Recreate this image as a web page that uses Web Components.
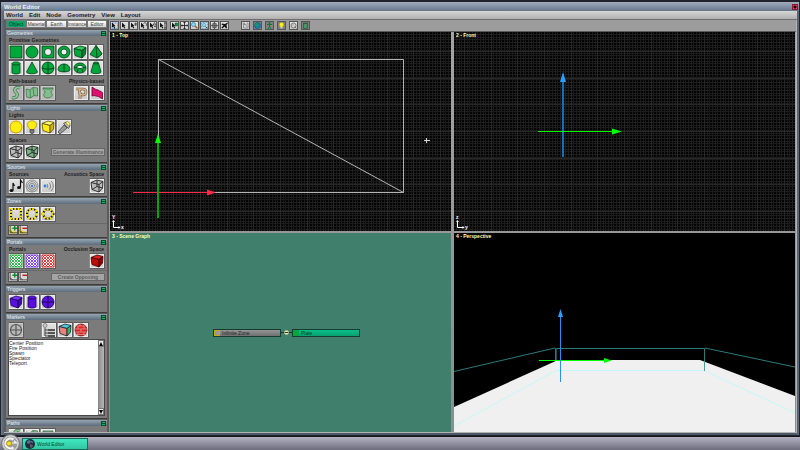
<!DOCTYPE html>
<html lang="en">
<head>
<meta charset="utf-8">
<title>World Editor</title>
<style>
  html, body {
    margin: 0;
    height: 100%;
    overflow: hidden;
    background: #2b3038;
    font-family: "Liberation Sans", Arial, sans-serif;
    font-size: 5px;
    line-height: 6px;
  }
  body {
    display: flex;
    flex-direction: column;
  }
</style>
</head>
<body>
<editor-window heading="World Editor">
  <menu-bar slot="menu" items="World,Edit,Node,Geometry,View,Layout"></menu-bar>
  <tool-sidebar slot="sidebar"></tool-sidebar>
  <tool-bar slot="toolbar"></tool-bar>
  <view-port heading="1 - Top" kind="top"></view-port>
  <view-port heading="2 - Front" kind="front"></view-port>
  <view-port heading="3 - Scene Graph" kind="graph">
    <scene-graph></scene-graph>
  </view-port>
  <view-port heading="4 - Perspective" kind="perspective"></view-port>
</editor-window>
<task-bar></task-bar>

<script>
const GREEN = 'fill="#00a83c" stroke="#053c18" stroke-width=".8"';
const PALE = 'fill="#7fc08c" stroke="#46734e" stroke-width=".8"';
const VIOLET = 'fill="#5a0ee0" stroke="#1c0458" stroke-width=".8"';
const LINE = 'fill="none" stroke="#222" stroke-width=".9"';

const box = (top, left, right, line) => `
  <g stroke="${line}" stroke-width=".8" stroke-linejoin="round">
    <path fill="${top}" d="M2 4.500 8 2l6 1.500-4 3z"/>
    <path fill="${left}" d="M2 4.500l8 2V14l-7-2.500z"/>
    <path fill="${right}" d="M10 6.500l4-3L13.500 10 10 14z"/>
  </g>`;
const wireBox = (fill) => `
  <path fill="${fill}" d="M2 4.500 8 2l6 1.500L13.500 10 10 14l-7-2.500z"/>
  <path ${LINE} d="M2 4.500 8 2l6 1.500-4 3zM2 4.500l1 7 7 2.500V6.500M14 3.500 13.500 10 10 14M8 2v6.500l5.500 1.500M8 8.500l-5 3"/>`;
const mesh = (color) => `
  <path fill="#fff" d="M2 2h12v12H2z"/>
  <path fill="none" stroke="${color}" stroke-width=".9" d="M2 2h12v12H2zM2 5l3-3M2 8l6-6M2 11l9-9M2 14 14 2M5 14l9-9M8 14l6-6M11 14l3-3M11 2l3 3M8 2l6 6M5 2l9 9M2 2l12 12M2 5l9 9M2 8l6 6M2 11l3 3"/>`;
const striped = (shape) => `
  <g fill="none" stroke-width="2.200">
    <g stroke="#1c1c1c">${shape}</g>
    <g stroke="#ffe600" stroke-dasharray="2 1.300">${shape}</g>
  </g>`;
const corner = (color, mark) => `
  <path fill="${color}" d="M2 2h4v8h8v4H2z"/>
  <path fill="none" stroke="#222" stroke-width="1.300" d="M3 1v12h12M3 9l4 4"/>
  ${mark}`;
const PLUS = '<path stroke="#0a8a2a" stroke-width="2.500" d="M7 5h8M11 1v8"/>';
const MINUS = '<path stroke="#c81818" stroke-width="2.500" d="M7 5h8"/>';
const ARROW = '<path fill="#111" d="M3 2l7 7H7.500l2 4-2 1-2-4L3 12z"/>';

const ICONS = {
  plate: `<path ${GREEN} d="M2 2h12v12H2z"/>`,
  disk: `<circle ${GREEN} cx="8" cy="8" r="6"/>`,
  holedPlate: `<path ${GREEN} d="M2 2h12v12H2z"/><circle cx="8" cy="8" r="3.500" fill="#eee" stroke="#053c18" stroke-width=".8"/>`,
  annulus: `<circle ${GREEN} cx="8" cy="8" r="6"/><circle cx="8" cy="8" r="3" fill="#eee" stroke="#053c18" stroke-width=".8"/>`,
  box: box("#35c95f", "#00a83c", "#048030", "#053c18"),
  pyramid: `<path ${GREEN} d="M8 1.500 2 10.500l7 3.500 5-4z"/><path ${GREEN} d="M8 1.500l1 12.500 5-4z"/>`,
  cylinder: `<path ${GREEN} d="M4 3.500v9c0 2 8 2 8 0v-9"/><ellipse ${GREEN} cx="8" cy="3.500" rx="4" ry="1.600"/>`,
  cone: `<path ${GREEN} d="M8 2 2.500 12c1 2.400 10 2.400 11 0z"/>`,
  sphere: `<circle ${GREEN} cx="8" cy="8" r="6"/><path fill="none" stroke="#053c18" stroke-width=".9" d="M8 2v12M2 8c2 1.400 10 1.400 12 0"/>`,
  dome: `<path ${GREEN} d="M2 10c0-8 12-8 12 0-1 2.500-11 2.500-12 0z"/><path fill="none" stroke="#053c18" stroke-width=".9" d="M8 4v8"/>`,
  torus: `<ellipse ${GREEN} cx="8" cy="8" rx="6" ry="5"/><ellipse cx="8" cy="7" rx="3.200" ry="1.600" fill="#eee" stroke="#053c18" stroke-width=".8"/><path fill="none" stroke="#053c18" stroke-width=".8" d="M2 7l3 1M14 7l-3 1M6 9l-1 3.500M10 9l1 3.500"/>`,
  frustum: `<path ${GREEN} d="M5.500 3 3 12c1 2.200 9 2.200 10 0L10.500 3z"/><ellipse ${GREEN} cx="8" cy="3" rx="2.500" ry="1"/>`,
  path: `<path fill="none" stroke="#46734e" stroke-width="3.200" d="M12 3C8 1 5 5 8 7.500S8 14 4 12.500"/><path fill="none" stroke="#8fc89a" stroke-width="1.800" d="M12 3C8 1 5 5 8 7.500S8 14 4 12.500"/>`,
  ribbon: `<path ${PALE} d="M2 4l4 1 3-2.500 4.500.5v8L10 10.500 6.500 13 2.500 12z"/><path fill="none" stroke="#46734e" stroke-width=".8" d="M6 5l.5 8M9 2.500l1 8"/>`,
  revolve: `<path ${PALE} d="M3 3h10c0 3-2 2-2 4s2 2 1 4-7 3-8 0 1-2 1-4-2-1-2-4z"/><path fill="none" stroke="#46734e" stroke-width=".8" d="M3 3c2 1.500 8 1.500 10 0"/>`,
  rope: `<path fill="none" stroke="#5d4530" stroke-width="2.600" d="M3 4h7c4 0 4 6 0 6S5 5 8 4M7 7v7"/><path fill="none" stroke="#d8b48e" stroke-width="1.600" d="M3 4h7c4 0 4 6 0 6S5 5 8 4M7 7v7"/>`,
  cloth: `<path fill="#e0106c" stroke="#6d0434" stroke-width=".8" d="M3 2l4 2.500 2 .5 4.500 2.500V14l-4-2.500L7 11l-2-.5-2 .5z"/>`,
  pointLight: `<circle cx="8" cy="8" r="6" fill="#ffee10" stroke="#e09a00"/>`,
  spotLight: `<path fill="#ffee10" stroke="#a88600" stroke-width=".7" d="M6 10.500C5.500 9 3.500 8 3.500 5.500c0-5 9-5 9 0 0 2.500-2 3.500-2.500 5z"/><path fill="#777" stroke="#333" stroke-width=".6" d="M6 10.500h4v3L8 15l-2-1.500z"/>`,
  boxLight: box("#fff870", "#ffee10", "#d2b400", "#5c4b00"),
  flashlight: `<path fill="#999" stroke="#444" stroke-width=".8" d="M8 6l3 3-7 6-2-2z"/><path fill="#bbb" stroke="#444" stroke-width=".8" d="M7.500 4.500l5 5 1.500-3L10.500 3z"/><ellipse cx="12" cy="4.500" rx="1.500" ry="2.500" transform="rotate(-45 12 4.500)" fill="#ffee60" stroke="#776a20" stroke-width=".5"/>`,
  wire: wireBox("#bbb"),
  wireGreen: wireBox("#7db488"),
  notes: `<path fill="none" stroke="#111" stroke-width="1.200" d="M5 12V5l1.500 3M12.500 9V2l2 3"/><ellipse cx="3.500" cy="12.500" rx="2" ry="1.600" fill="#111"/><ellipse cx="11" cy="9.500" rx="2" ry="1.600" fill="#111"/>`,
  ambient: `<g fill="none" stroke="#777" stroke-width=".8"><circle cx="8" cy="8" r="6"/><circle cx="8" cy="8" r="4.300"/><circle cx="8" cy="8" r="2.600"/></g><circle cx="8" cy="8" r="1.200" fill="#2c86dc"/>`,
  directed: `<circle cx="5" cy="8" r="1.400" fill="#2c86dc"/><path fill="none" stroke="#777" stroke-width=".9" d="M7 6c1 1 1 3 0 4M9 4.500c2 2 2 5 0 7M11 3c3 3 3 7 0 10"/>`,
  zoneBox: striped('<path d="M3 3h10v10H3z"/>'),
  zoneDisk: striped('<circle cx="8" cy="8" r="5"/>'),
  zonePoly: striped('<path d="M2.500 8l3-4.500h5l3 4.500-3 4.500h-5z"/>'),
  zoneAdd: corner("#f0d830", PLUS),
  zoneRemove: corner("#f0d830", MINUS),
  vertexAdd: corner("#e0e0e0", PLUS),
  vertexRemove: corner("#e0e0e0", MINUS),
  portalGreen: mesh("#20b040"),
  portalViolet: mesh("#7a3cf0"),
  portalRed: mesh("#dc2c2c"),
  occlusion: box("#e02020", "#c40808", "#8c0404", "#380000"),
  triggerBox: box("#7a34ff", "#5a0ee0", "#4208b0", "#1c0458"),
  triggerCylinder: `<path ${VIOLET} d="M4 3.500v9c0 2 8 2 8 0v-9"/><ellipse ${VIOLET} cx="8" cy="3.500" rx="4" ry="1.600"/>`,
  triggerSphere: `<circle ${VIOLET} cx="8" cy="8" r="6"/><path fill="none" stroke="#1c0458" d="M8 2v12M2 8h12"/>`,
  locator: `<g fill="none" stroke="#555" stroke-width="1.200"><circle cx="8" cy="8" r="5.500"/><path d="M8 2v12M2 8h12"/></g>`,
  tree: `<circle cx="4" cy="3.500" r="2" fill="#ccc" stroke="#777" stroke-width=".8"/><path fill="none" stroke="#444" d="M4 6v8M4 8h3M4 11h3M4 14h3"/><path stroke="#555" stroke-width="2" d="M7 8h7M7 11h7M7 14h7"/>`,
  cubeFaces: box("#50c8dc", "#f08078", "#3cb05c", "#112233"),
  brick: `<circle cx="8" cy="8" r="6" fill="#d42424" stroke="#6d0c0c" stroke-width=".7"/><path fill="none" stroke="#f0a0a0" stroke-width=".7" d="M4 4h8M2 7h12M2 10h12M4 12.500h8M7 2v2M5 4v3M11 4v3M8 7v3M5 10v2.500M11 10v2.500"/>`,
  region: `<path fill="none" stroke="#35a0dc" stroke-width="2" stroke-dasharray="2 1" d="M3 3h11v11H3z"/>${ARROW}`,
  arrow: ARROW,
  arrowMove: ARROW + '<path stroke="#222" stroke-width="1.500" d="M9 5h7M12.500 2v7"/>',
  arrowRotate: ARROW + '<path fill="none" stroke="#222" stroke-width="1.500" d="M8 4c4-4 8 1 5 5"/>',
  arrowScale: ARROW + '<path fill="none" stroke="#222" stroke-width="1.300" d="M9 7l3-5 3 5zM11 10h4"/>',
  arrowSize: ARROW + '<path stroke="#222" stroke-width="1.500" d="M13 2v12M11 3h4M11 13h4"/>',
  arrowNode: ARROW + '<path fill="#0a9a3c" stroke="#053c18" d="M9 3h5v6H9z"/>',
  pan: `<path fill="none" stroke="#111" stroke-width="1.600" d="M8 1v14M1 8h14M6 3l2-2 2 2M6 13l2 2 2-2M3 6 1 8l2 2M13 6l2 2-2 2"/>`,
  zoom: `<circle cx="6" cy="6" r="4" fill="#8cd4f4" stroke="#3388aa" stroke-width="1.500"/><path stroke="#a05a20" stroke-width="2.500" d="M9 9l5 5"/>`,
  zoomBox: `<path fill="none" stroke="#35a0dc" stroke-width="1.500" stroke-dasharray="2 1" d="M2 2h12v12H2z"/><circle cx="7" cy="7" r="3.500" fill="#8cd4f4" stroke="#38a"/><path stroke="#345" stroke-width="2" d="M10 10l4 4"/>`,
  orbit: `<g fill="none" stroke="#333" stroke-width="1.200"><circle cx="8" cy="8" r="5"/><path d="M8 1v14M1 8h14"/><ellipse cx="8" cy="8" rx="2.500" ry="5"/></g>`,
  fly: `<path fill="#111" d="M14 2 9 5 3 4 2 6l4 2-4 4 2 2 4-4 3 4 2-1-1-6 3-4z"/>`,
  graph: `<path fill="none" stroke="#666" stroke-width="1.200" d="M3 3h3v3H3zM10 3h3v10H4V8l5-3 1 5"/>`,
  world: `<circle cx="8" cy="8" r="6" fill="#1478d8" stroke="#123c78"/><path fill="#18a040" d="M5 3l5 1-2 4 3 2-2 4-2-4-4-3z"/>`,
  figure: `<circle cx="8" cy="3" r="1.800" fill="#0d7a30"/><path fill="none" stroke="#0d7a30" stroke-width="2" d="M3 6h10M8 5v5l-3 5M8 10l3 5"/>`,
  bulb: `<path fill="#fff020" stroke="#c0a000" stroke-width=".6" d="M6 11C3 8 3 2 8 2s5 6 2 9z"/><path fill="#ccc" d="M6 11h4v3H6z"/>`,
  gear: `<circle cx="8" cy="8" r="5" fill="#ddd" stroke="#555" stroke-width="1.500"/><circle cx="7" cy="7" r="2" fill="#fff" stroke="#777"/><path stroke="#555" stroke-width="1.500" d="M10 10l4 4"/>`,
  bin: `<path fill="#4c9564" stroke="#234d33" stroke-width="1.300" d="M4 4h8v10H4zM3 3h10"/>`
};

function svgIcon(name) {
  return `<svg viewBox="1 1 14 14" aria-hidden="true">${ICONS[name]}</svg>`;
}

class IconButton extends HTMLElement {
  constructor() {
    super();
    this.attachShadow({ mode: "open" });
  }

  connectedCallback() {
    const icon = this.getAttribute("icon");
    this.shadowRoot.innerHTML = `
      <style>
        :host {
          display: block;
          flex: none;
          width: 16px;
          height: 16px;
        }
        :host([size="small"]) { width: 10px; height: 10px; }
        :host([size="tool"]) { width: 9px; height: 9px; }
        button {
          display: block;
          box-sizing: border-box;
          width: 100%;
          height: 100%;
          padding: 0;
          border: 1px solid #5c5c5c;
          border-left-color: #8c8c8c;
          background: linear-gradient(#e4e4e4, #cacaca);
          box-shadow: inset 0 0 0 1px #ececec;
        }
        :host([size]) button { box-shadow: none; border-color: #555; }
        :host([dim]) button { background: #b8b8b8; box-shadow: inset 0 0 0 1px #c8c8c8; }
        :host([pressed]) button { background: #808080; }
        svg { display: block; width: 100%; height: 100%; }
      </style>
      <button type="button" aria-label="${icon}">${svgIcon(icon)}</button>
    `;
  }
}

class MenuBar extends HTMLElement {
  constructor() {
    super();
    this.attachShadow({ mode: "open" });
  }

  connectedCallback() {
    const items = this.getAttribute("items").split(",");
    this.shadowRoot.innerHTML = `
      <style>
        :host {
          display: flex;
          align-items: center;
          gap: 6px;
          height: 8px;
          padding-left: 2px;
          background: linear-gradient(#d6d6d6, #b0b0b0);
          border-bottom: 1px solid #6e6e6e;
        }
        button {
          padding: 0;
          border: 0;
          background: none;
          color: #1c1c1c;
          font: bold 6px/8px "Liberation Sans", Arial, sans-serif;
        }
      </style>
      ${items.map((item) => `<button type="button">${item}</button>`).join("")}
    `;
  }
}

class ToolBar extends HTMLElement {
  constructor() {
    super();
    this.attachShadow({ mode: "open" });
    const group = (cls, icons, pressed = []) => `
      <div class="${cls}">
        ${icons.map((i) => `<icon-button size="tool" icon="${i}"${pressed.includes(i) ? " pressed" : ""}></icon-button>`).join("")}
      </div>`;
    this.shadowRoot.innerHTML = `
      <style>
        :host {
          display: flex;
          align-items: center;
          height: 11px;
          padding-left: 1px;
          background: #9c9c9c;
          border-bottom: 1px solid #5c5c5c;
        }
        div { display: flex; justify-content: space-between; }
        .select { width: 57px; margin-right: 3px; }
        .node { margin-right: 1px; }
        .camera { width: 49px; margin-right: 12px; }
        .show { width: 69px; }
      </style>
      ${group("select", ["region", "arrow", "arrowMove", "arrowRotate", "arrowScale", "arrowSize"])}
      ${group("node", ["arrowNode"])}
      ${group("camera", ["pan", "zoom", "zoomBox", "orbit", "fly"])}
      ${group("show", ["graph", "world", "figure", "bulb", "gear", "bin"], ["world", "figure", "bulb", "bin"])}
    `;
  }
}

class ToolPanel extends HTMLElement {
  constructor() {
    super();
    this.attachShadow({ mode: "open" });
  }

  connectedCallback() {
    this.shadowRoot.innerHTML = `
      <style>
        :host {
          display: flex;
          flex-direction: column;
          flex: none;
          background: #7b7b7b;
          box-shadow: 0 1px 0 #3c3c3c;
        }
        header {
          display: flex;
          justify-content: space-between;
          align-items: center;
          flex: none;
          height: 6px;
          padding: 0 1px;
          background: linear-gradient(#94a4b2, #5c6c7c);
          color: #e8edf2;
          line-height: 6px;
        }
        header button {
          width: 5px;
          height: 5px;
          padding: 0;
          border: 1px solid #0a4a28;
          background: linear-gradient(#10b860 1px, #0a4a28 1px 2px, #10b860 2px);
        }
        .body {
          display: flex;
          flex-direction: column;
          flex: 1;
          gap: 1px;
          min-height: 0;
          padding: 0 2px 2px;
        }
        :host([plain]) .body { padding-top: 2px; }
      </style>
      <header>
        <span>${this.getAttribute("heading")}</span>
        <button type="button" aria-label="Collapse"></button>
      </header>
      <div class="body"><slot></slot></div>
    `;
  }
}

class MarkerList extends HTMLElement {
  constructor() {
    super();
    this.attachShadow({ mode: "open" });
    const names = ["Center Position", "Fire Position", "Spawn", "Spectator", "Teleport"];
    this.shadowRoot.innerHTML = `
      <style>
        :host {
          display: flex;
          flex: 1;
          min-height: 0;
          border: 1px solid #484848;
          background: #fff;
        }
        select {
          flex: 1;
          min-width: 0;
          height: 100%;
          padding: 0;
          border: 0;
          background: #fff;
          overflow: hidden;
          outline: none;
          font: 5px/5px "Liberation Sans", Arial, sans-serif;
        }
        option {
          min-height: 0;
          height: 5px;
          padding: 0;
          color: #222;
        }
        .scroll {
          display: flex;
          flex-direction: column;
          justify-content: space-between;
          width: 6px;
          background: linear-gradient(90deg, #888, #b8b8b8);
        }
        .scroll button {
          width: 6px;
          height: 7px;
          padding: 0;
          border: 1px solid #777;
          background: #eee;
        }
        svg { display: block; width: 4px; height: 4px; }
      </style>
      <select multiple size="5" aria-label="Markers">
        ${names.map((name) => `<option>${name}</option>`).join("")}
      </select>
      <div class="scroll">
        <button type="button" aria-label="Up"><svg viewBox="0 0 4 4"><path d="M2 0l2 4H0z"/></svg></button>
        <button type="button" aria-label="Down"><svg viewBox="0 0 4 4"><path d="M2 4L0 0h4z"/></svg></button>
      </div>
    `;
  }
}

class ToolSidebar extends HTMLElement {
  constructor() {
    super();
    this.attachShadow({ mode: "open" });
    const icons = (names, attrs = "") =>
      names.map((n) => `<icon-button icon="${n}" ${attrs}></icon-button>`).join("");
    this.shadowRoot.innerHTML = `
      <style>
        :host {
          display: flex;
          flex-direction: column;
          gap: 2px;
          box-sizing: border-box;
          padding: 0 2px;
          min-height: 0;
          overflow: hidden;
          background: #5c5c5c;
        }
        nav { display: flex; height: 8px; }
        nav button {
          flex: 1;
          min-width: 0;
          padding: 0;
          border: 1px solid #777;
          background: linear-gradient(#fff, #d4d4d4);
          color: #444;
          font: 5px/6px "Liberation Sans", Arial, sans-serif;
        }
        nav button.active { background: #08a870; color: #053c24; }
        h2, .row { display: flex; margin: 0; }
        h2 {
          justify-content: space-between;
          height: 8px;
          margin-bottom: -1px;
          padding: 0 1px;
          color: #1c1c1c;
          font: bold 5px/9px "Liberation Sans", Arial, sans-serif;
        }
        .row { align-items: center; }
        .grid { display: grid; grid-template-columns: repeat(6, 16px); }
        .end { margin-left: auto; }
        .small {
          margin: 0 -2px;
          padding: 1px 2px 0;
          border-top: 1px solid #696969;
        }
        .text {
          width: 54px;
          height: 8px;
          margin-left: auto;
          padding: 0;
          border: 1px solid #666;
          background: #a4a4a4;
          color: #5c5c5c;
          font: bold 5px/6px "Liberation Sans", Arial, sans-serif;
        }
        .markers { flex: 1; }
        .slots { display: grid; grid-template-columns: 33px repeat(3, 16px); }
        .clipped { height: 12px; overflow: hidden; }
      </style>
      <nav>
        <button type="button" class="active">Object</button>
        <button type="button">Material</button>
        <button type="button">Earth</button>
        <button type="button">Instance</button>
        <button type="button">Editor</button>
      </nav>
      <tool-panel heading="Geometries">
        <h2>Primitive Geometries</h2>
        <div class="grid">
          ${icons(["plate", "disk", "holedPlate", "annulus", "box", "pyramid", "cylinder", "cone", "sphere", "dome", "torus", "frustum"])}
        </div>
        <h2><span>Path-based</span><span>Physics-based</span></h2>
        <div class="row">
          ${icons(["path", "ribbon", "revolve"], "dim")}
          <icon-button class="end" icon="rope"></icon-button>
          <icon-button icon="cloth"></icon-button>
        </div>
      </tool-panel>
      <tool-panel heading="Lights">
        <h2>Lights</h2>
        <div class="row">${icons(["pointLight", "spotLight", "boxLight", "flashlight"])}</div>
        <h2>Spaces</h2>
        <div class="row">
          ${icons(["wire", "wireGreen"])}
          <button type="button" class="text">Generate Illuminance</button>
        </div>
      </tool-panel>
      <tool-panel heading="Sources">
        <h2><span>Sources</span><span>Acoustics Space</span></h2>
        <div class="row">
          ${icons(["notes", "ambient", "directed"])}
          <icon-button class="end" icon="wire"></icon-button>
        </div>
      </tool-panel>
      <tool-panel heading="Zones" plain>
        <div class="row">${icons(["zoneBox", "zoneDisk", "zonePoly"])}</div>
        <div class="row small">${icons(["zoneAdd", "zoneRemove"], 'size="small"')}</div>
      </tool-panel>
      <tool-panel heading="Portals">
        <h2><span>Portals</span><span>Occlusion Space</span></h2>
        <div class="row">
          ${icons(["portalGreen", "portalViolet", "portalRed"])}
          <icon-button class="end" icon="occlusion"></icon-button>
        </div>
        <div class="row small">
          ${icons(["vertexAdd", "vertexRemove"], 'size="small"')}
          <button type="button" class="text">Create Opposing</button>
        </div>
      </tool-panel>
      <tool-panel heading="Triggers" plain>
        <div class="row">${icons(["triggerBox", "triggerCylinder", "triggerSphere"])}</div>
      </tool-panel>
      <tool-panel class="markers" heading="Markers" plain>
        <div class="slots">
          <icon-button icon="locator" dim></icon-button>
          ${icons(["tree", "cubeFaces", "brick"])}
        </div>
        <marker-list></marker-list>
      </tool-panel>
      <tool-panel class="clipped" heading="Paths" plain>
        <div class="row">${icons(["path", "ribbon", "revolve"])}</div>
      </tool-panel>
    `;
  }
}

const gizmo = (up, right) => `
  <g fill="#fff" font-size="5" font-family="Liberation Sans, Arial, sans-serif" font-weight="bold">
    <text x="2" y="187">${up}</text>
    <text x="11" y="197">${right}</text>
    <path fill="none" stroke="#fff" d="M3.500 189v6.500H10"/>
    <path d="M2 190h3l-1.500-2zM8.500 194v3l2-1.500z"/>
  </g>`;

const SCENES = {
  top: `
    <path fill="none" stroke="#b4b4b4" d="M48.500 27.500h245v133h-245zl245 133"/>
    <path stroke="#ff2846" d="M23 160.500h75"/>
    <path fill="#ff2846" d="M97 157.500v6l9-3z"/>
    <path stroke="#00a800" stroke-width="2" d="M48 110v76"/>
    <path fill="#00ff00" d="M45 111h6l-3-9z"/>
    <path stroke="#d8d8d8" d="M314 108.500h6M316.500 106v5"/>
    ${gizmo("Y", "x")}`,
  front: `
    <path stroke="#1a6cb0" stroke-width="2" d="M109 49v76"/>
    <path fill="#28a0ff" d="M106 50h6l-3-10z"/>
    <path stroke="#00ff00" d="M84 99.500h75"/>
    <path fill="#00ff00" d="M158 96.500v6l10-3z"/>
    ${gizmo("z", "y")}`,
  perspective: `
    <g fill="none" stroke="#2c7a7a">
      <path d="M0 138.500l101-23.500M101 115.500h150M251 115l90 19"/>
      <path d="M101.500 115v23M250.500 115v23"/>
      <path stroke="#1c5050" d="M102.500 115v15"/>
    </g>
    <path fill="#f0f0f0" d="M104 127h142l95 36v36H0v-25z"/>
    <path fill="none" stroke="#c4f8f8" d="M0 193l101-55M101 137.500h150M251 138l90 42"/>
    <path stroke="#4c9c9c" d="M250.500 129v9"/>
    <path stroke="#00ff00" d="M85 127.500h66"/>
    <path fill="#00ff00" d="M150 125v5l8-2.500z"/>
    <path stroke="#2890f0" d="M106.500 84v65"/>
    <path fill="#28a0ff" d="M104 84h5l-2.500-8z"/>`
};

class ViewPort extends HTMLElement {
  constructor() {
    super();
    this.attachShadow({ mode: "open" });
  }

  connectedCallback() {
    const kind = this.getAttribute("kind");
    const scene = SCENES[kind]
      ? `<svg viewBox="0 0 341 199" preserveAspectRatio="xMidYMid slice">${SCENES[kind]}</svg>`
      : "";
    this.shadowRoot.innerHTML = `
      <style>
        :host {
          display: grid;
          min-width: 0;
          min-height: 0;
          overflow: hidden;
          background: #000;
        }
        /* minor lines three to 8px, major lines three to 80px */
        :host([kind="top"]), :host([kind="front"]) {
          --minor: transparent 2px, #1c1c1c 2px 3px, transparent 3px 5px, #1c1c1c 5px 6px, transparent 6px 7px, #1c1c1c 7px;
          --major: #282828 1px, transparent 1px 27px, #282828 27px 28px, transparent 28px 53px, #282828 53px 54px, transparent 54px;
          background:
            linear-gradient(90deg, var(--major)) 10px 0 / 80px 80px,
            linear-gradient(var(--major)) 0 19px / 80px 80px,
            linear-gradient(90deg, var(--minor)) 0 0 / 8px 8px,
            linear-gradient(var(--minor)) 0 0 / 8px 8px,
            #040404;
        }
        :host([kind="graph"]) { background: #3f7f6c; }
        h3, svg, ::slotted(*) { grid-area: 1 / 1; min-width: 0; min-height: 0; }
        h3 {
          z-index: 1;
          align-self: start;
          margin: 0;
          padding-left: 2px;
          color: #ffffb4;
          font: bold 5px/7px "Liberation Sans", Arial, sans-serif;
        }
        svg { width: 100%; height: 100%; }
      </style>
      <h3>${this.getAttribute("heading")}</h3>
      ${scene}
      <slot></slot>
    `;
  }
}

class SceneGraph extends HTMLElement {
  constructor() {
    super();
    this.attachShadow({ mode: "open" });
    this.shadowRoot.innerHTML = `
      <style>
        :host {
          display: flex;
          justify-content: center;
          align-items: center;
          padding-left: 12px;
        }
        .node {
          display: flex;
          align-items: center;
          gap: 2px;
          box-sizing: border-box;
          width: 68px;
          height: 8px;
          padding: 0;
          border: 1px solid #163c30;
          color: #1c1c1c;
          font: 5px/6px "Liberation Sans", Arial, sans-serif;
        }
        .node::before {
          content: "";
          box-sizing: border-box;
          width: 6px;
          height: 6px;
          background: #00a83c;
        }
        .zone { background: linear-gradient(#949494, #707070); }
        .zone::before { background: #999; border: 1px solid #c8a810; }
        .plate { background: linear-gradient(#08c088, #08a070); color: #064028; }
        .link {
          display: flex;
          justify-content: center;
          align-items: center;
          width: 11px;
          background: linear-gradient(#163c30, #163c30) center / 100% 1px no-repeat;
        }
        .link button {
          width: 5px;
          height: 5px;
          padding: 0;
          border: 1px solid #c8c890;
          border-radius: 50%;
          background: linear-gradient(#f0f0b4 1px, #333 1px 2px, #f0f0b4 2px);
        }
      </style>
      <button type="button" class="node zone">Infinite Zone</button>
      <div class="link"><button type="button" aria-label="Collapse"></button></div>
      <button type="button" class="node plate">Plate</button>
    `;
  }
}

class EditorWindow extends HTMLElement {
  constructor() {
    super();
    this.attachShadow({ mode: "open" });
  }

  connectedCallback() {
    this.shadowRoot.innerHTML = `
      <style>
        :host {
          display: flex;
          flex-direction: column;
          flex: 1;
          min-height: 0;
          box-sizing: border-box;
          padding: 0 2px 2px 3px;
          border: 1px solid #20242a;
          border-width: 2px 1px 1px;
          background: linear-gradient(90deg, #6c7a8c, #4c5866 4px calc(100% - 4px), #5c6a7c);
        }
        header {
          display: flex;
          justify-content: space-between;
          align-items: center;
          height: 9px;
          margin: 0 -2px 0 -3px;
          padding: 0 1px 0 3px;
          background: linear-gradient(#a0aebe, #66768a);
        }
        h1 {
          margin: 0;
          color: #f0f4f8;
          font: bold 6px/8px "Liberation Sans", Arial, sans-serif;
        }
        header button {
          width: 6px;
          height: 6px;
          padding: 0;
          border: 1px solid #8c1838;
          background: radial-gradient(#200 1px, #e04870 2px);
        }
        .body {
          display: grid;
          grid-template: auto minmax(0, 1fr) / 105px minmax(0, 1fr);
          flex: 1;
          min-height: 0;
          border-bottom: 1px solid #b4b4b4;
          border-right: 1px solid #b4b4b4;
        }
        ::slotted([slot="sidebar"]) { grid-row: 1 / 3; }
        main {
          display: grid;
          grid-template: repeat(2, minmax(0, 1fr)) / repeat(2, minmax(0, 1fr));
          gap: 2px 3px;
          min-height: 0;
          padding: 0 1px;
          background: linear-gradient(#a4a4a4, #8c8c8c);
        }
      </style>
      <header>
        <h1>${this.getAttribute("heading")}</h1>
        <button type="button" aria-label="Close"></button>
      </header>
      <slot name="menu"></slot>
      <div class="body">
        <slot name="sidebar"></slot>
        <slot name="toolbar"></slot>
        <main><slot></slot></main>
      </div>
    `;
  }
}

class TaskBar extends HTMLElement {
  constructor() {
    super();
    this.attachShadow({ mode: "open" });
    this.shadowRoot.innerHTML = `
      <style>
        :host {
          display: flex;
          align-items: center;
          gap: 2px;
          flex: none;
          height: 13px;
          padding-left: 1px;
          border-top: 1px solid #14161a;
          background: linear-gradient(#b4b4c4, #6c6c7c);
        }
        button {
          display: flex;
          align-items: center;
          flex: none;
          padding: 0;
          border: 0;
          background: none;
          font: 5px/6px "Liberation Sans", Arial, sans-serif;
        }
        .logo { width: 19px; height: 13px; }
        .logo svg { flex: none; width: 19px; height: 19px; margin: -3px 0; }
        .task {
          box-sizing: border-box;
          gap: 2px;
          width: 66px;
          height: 12px;
          padding-left: 2px;
          border: 1px solid #1c6c58;
          background: linear-gradient(#40e8c0, #30c8a4);
          color: #0c4434;
        }
        .task svg { width: 10px; height: 10px; }
      </style>
      <button type="button" class="logo" aria-label="Start">
        <svg viewBox="0 0 19 19">
          <circle cx="9.500" cy="9.500" r="9" fill="#b4b4b4" stroke="#777"/>
          <circle cx="9.500" cy="9.500" r="7.500" fill="#a0a0a0" stroke="#e0e0e0"/>
          <path fill="none" stroke="#f4f4f4" stroke-width="2.200" d="M12.500 5.500a5 5 0 1 0 0 8"/>
          <path fill="#f4f4f4" d="M9 8.500h4V6l4 3.500h-8z"/>
          <circle cx="8" cy="9.500" r="2.500" fill="#f8e020" stroke="#887820" stroke-width=".7"/>
        </svg>
      </button>
      <button type="button" class="task">
        <svg viewBox="0 0 10 10">
          <circle cx="5" cy="5" r="5" fill="#1c2c44"/>
          <path fill="#54708c" d="M2 2l3-1 1 2-2 2-2-1z"/>
          <path fill="#6c5844" d="M5 5l3 1-1 3-2-1z"/>
          <path fill="#a8b8c8" d="M6 2l2 1-1 1z"/>
        </svg>
        <span>World Editor</span>
      </button>
    `;
  }
}

customElements.define("icon-button", IconButton);
customElements.define("menu-bar", MenuBar);
customElements.define("tool-bar", ToolBar);
customElements.define("tool-panel", ToolPanel);
customElements.define("marker-list", MarkerList);
customElements.define("tool-sidebar", ToolSidebar);
customElements.define("view-port", ViewPort);
customElements.define("scene-graph", SceneGraph);
customElements.define("editor-window", EditorWindow);
customElements.define("task-bar", TaskBar);
</script>
</body>
</html>
